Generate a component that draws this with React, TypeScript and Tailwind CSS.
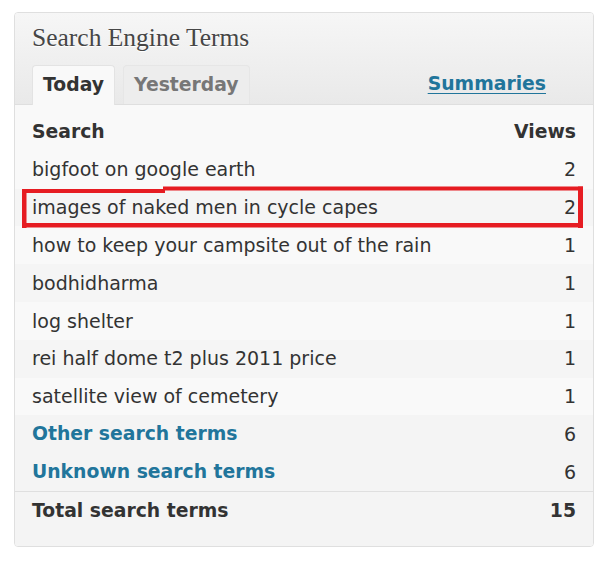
import React from "react";

const rows: [string, number][] = [
  ["bigfoot on google earth", 2],
  ["images of naked men in cycle capes", 2],
  ["how to keep your campsite out of the rain", 1],
  ["bodhidharma", 1],
  ["log shelter", 1],
  ["rei half dome t2 plus 2011 price", 1],
  ["satellite view of cemetery", 1],
];

export default function App() {
  return (
    <div className="relative w-[602px] h-[563px] bg-white overflow-hidden font-['DejaVu_Sans',sans-serif] text-[#333]">
      <div className="ml-[14px] mt-[12px] w-[580px] border border-[#dfdfdf] rounded-[4px] overflow-hidden">
        {/* header */}
        <div className="bg-linear-to-b from-[#f6f6f6] to-[#e9e9e9] border-b border-[#dfdfdf] px-[17px] pt-[10px]">
          <div className="font-['Liberation_Serif',serif] text-[25.5px] leading-[30px] text-[#464646] [text-shadow:0_1px_0_#fff]">
            Search Engine Terms
          </div>
          <div className="mt-[11px] flex items-end h-[40px]">
            <div className="h-[40px] -mb-px flex items-center px-[10px] bg-[#f9f9f9] border border-b-0 border-[#e3e3e3] rounded-t-[4px] font-bold text-[18.8px] text-[#333]">
              Today
            </div>
            <div className="ml-[8px] h-[39px] flex items-center px-[10px] bg-[#ededed] border border-b-0 border-[#e6e6e6] rounded-t-[4px] font-bold text-[18.8px] text-[#777]">
              Yesterday
            </div>
            <div className="ml-auto mr-[30px] h-[40px] flex items-center">
              <span className="font-bold text-[18.8px] text-[#21759b] underline underline-offset-[3px]">
                Summaries
              </span>
            </div>
          </div>
        </div>
        {/* body */}
        <div className="bg-[#f9f9f9] pt-[8px]">
          <div className="h-[37.8px] flex items-center justify-between px-[17px] font-bold text-[18.8px]">
            <span>Search</span>
            <span>Views</span>
          </div>
          {rows.map(([t, v], i) => (
            <div
              key={t}
              className={
                "h-[37.8px] flex items-center justify-between px-[17px] text-[19px] " +
                (i % 2 === 1 ? "bg-[#f5f5f5]" : "bg-[#f9f9f9]")
              }
            >
              <span>{t}</span>
              <span>{v}</span>
            </div>
          ))}
        </div>
        <div className="bg-[#f4f4f4] border-b border-[#dfdfdf]">
          <div className="h-[37.8px] flex items-center justify-between px-[17px]">
            <span className="font-bold text-[18.8px] text-[#21759b]">Other search terms</span>
            <span className="text-[19px]">6</span>
          </div>
          <div className="h-[37.8px] flex items-center justify-between px-[17px]">
            <span className="font-bold text-[18.8px] text-[#21759b]">Unknown search terms</span>
            <span className="text-[19px]">6</span>
          </div>
        </div>
        <div className="bg-[#f4f4f4] pb-[16px]">
          <div className="h-[37.8px] flex items-center justify-between px-[17px] font-bold text-[18.8px]">
            <span>Total search terms</span>
            <span>15</span>
          </div>
        </div>
      </div>
      {/* red annotation box */}
      <svg className="absolute left-0 top-0 pointer-events-none" width="602" height="563">
        <g fill="#e61c22">
          <rect x="22" y="189" width="4.5" height="39" />
          <rect x="22" y="189" width="143" height="4" />
          <rect x="163" y="186.5" width="420" height="4" />
          <rect x="578" y="186.5" width="5" height="41.5" />
          <rect x="22" y="223" width="561" height="4.5" />
        </g>
      </svg>
    </div>
  );
}
